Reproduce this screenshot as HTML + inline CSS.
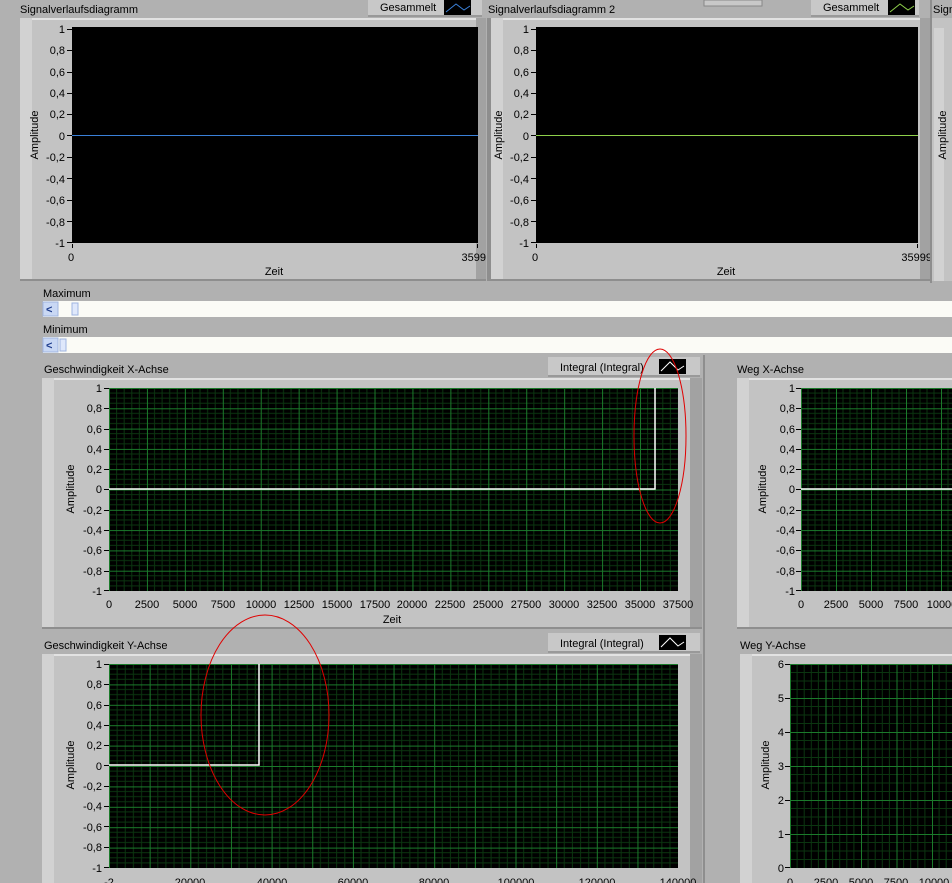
<!DOCTYPE html>
<html><head><meta charset="utf-8"><style>
html,body{margin:0;padding:0;background:#b1b1b1;}
svg{display:block}
text{font-family:"Liberation Sans",Tahoma,sans-serif;font-size:11px;fill:#000}
.e{text-anchor:end}.m{text-anchor:middle}
.t{stroke:#000;stroke-width:1;shape-rendering:crispEdges}
</style></head><body>
<svg width="952" height="883" viewBox="0 0 952 883" xmlns="http://www.w3.org/2000/svg">
<defs>
<pattern id="gA" patternUnits="userSpaceOnUse" x="109" y="388" width="37.93" height="20.3">
<rect width="37.93" height="20.3" fill="#000"/>
<path d="M7.59 0V20.3M15.17 0V20.3M22.76 0V20.3M30.34 0V20.3M0 5.07H37.93M0 10.15H37.93M0 15.22H37.93" stroke="#0b3510" stroke-width="1"/>
<path d="M0.5 0V20.3M0 0.5H37.93" stroke="#1b7a2b" stroke-width="1"/>
</pattern>
<pattern id="gB" patternUnits="userSpaceOnUse" x="109" y="664" width="40.65" height="20.4">
<rect width="40.65" height="20.4" fill="#000"/>
<path d="M8.13 0V20.4M16.26 0V20.4M24.39 0V20.4M32.52 0V20.4M0 5.1H40.65M0 10.2H40.65M0 15.3H40.65" stroke="#0b3510"/>
<path d="M0.5 0V20.4M0 0.5H40.65" stroke="#1b7a2b"/>
</pattern>
<pattern id="gC" patternUnits="userSpaceOnUse" x="801" y="388" width="35" height="20.3">
<rect width="35" height="20.3" fill="#000"/>
<path d="M7 0V20.3M14 0V20.3M21 0V20.3M28 0V20.3M0 5.07H35M0 10.15H35M0 15.22H35" stroke="#0b3510"/>
<path d="M0.5 0V20.3M0 0.5H35" stroke="#1b7a2b"/>
</pattern>
<pattern id="gD" patternUnits="userSpaceOnUse" x="790" y="664" width="35.5" height="34">
<rect width="35.5" height="34" fill="#000"/>
<path d="M7.1 0V34M14.2 0V34M21.3 0V34M28.4 0V34M0 8.5H35.5M0 17H35.5M0 25.5H35.5" stroke="#0b3510"/>
<path d="M0.5 0V34M0 0.5H35.5" stroke="#1b7a2b"/>
</pattern>
</defs>

<rect x="0" y="0" width="952" height="283" fill="#b1b1b1"/>
<rect x="704" y="0" width="58" height="6" fill="#c8c8c8" stroke="#888"/>
<!-- chart 1 -->
<rect x="20" y="18" width="466" height="263" fill="#c3c3c3"/>
<rect x="20" y="18" width="466" height="2" fill="#e2e2e2"/>
<rect x="20" y="18" width="12" height="263" fill="#d2d2d2"/>
<rect x="476" y="18" width="10" height="263" fill="#a2a2a2"/>
<rect x="20" y="279" width="466" height="2" fill="#8e8e8e"/>
<rect x="72" y="27" width="406" height="216" fill="#000"/>
<rect x="72" y="135" width="406" height="1" fill="#3a80d8"/>
<path class="t" d="M67 29.5H72M67 50.5H72M67 72.5H72M67 93.5H72M67 114.5H72M67 135.5H72M67 157.5H72M67 178.5H72M67 200.5H72M67 221.5H72M67 242.5H72M72.5 244V248M477.5 244V248"/>
<text x="20" y="13">Signalverlaufsdiagramm</text>
<rect x="368" y="0" width="114" height="17" fill="#c8c8c8"/><rect x="368" y="15" width="114" height="2" fill="#999"/>
<text x="380" y="11">Gesammelt</text>
<rect x="444" y="0" width="27" height="15" fill="#000"/>
<polyline points="446,12 456,4 464,10 470,6" fill="none" stroke="#3a80d8"/>
<text class="e" x="65" y="33">1</text><text class="e" x="65" y="54">0,8</text><text class="e" x="65" y="76">0,6</text><text class="e" x="65" y="97">0,4</text><text class="e" x="65" y="118">0,2</text><text class="e" x="65" y="140">0</text><text class="e" x="65" y="161">-0,2</text><text class="e" x="65" y="183">-0,4</text><text class="e" x="65" y="204">-0,6</text><text class="e" x="65" y="226">-0,8</text><text class="e" x="65" y="247">-1</text>
<text class="m" transform="translate(38,135) rotate(-90)">Amplitude</text>
<text x="68" y="261">0</text><text class="e" x="486" y="261">3599</text>
<text class="m" x="274" y="275">Zeit</text>

<!-- chart 2 -->
<rect x="487" y="18" width="443" height="263" fill="#c3c3c3"/>
<rect x="487" y="18" width="443" height="2" fill="#e2e2e2"/>
<rect x="487" y="18" width="4" height="263" fill="#8e8e8e"/>
<rect x="491" y="18" width="12" height="263" fill="#d2d2d2"/>
<rect x="920" y="18" width="10" height="263" fill="#a2a2a2"/>
<rect x="487" y="279" width="443" height="2" fill="#8e8e8e"/>
<rect x="536" y="27" width="382" height="216" fill="#000"/>
<rect x="536" y="135" width="382" height="1" fill="#8ed04a"/>
<path class="t" d="M531 29.5H536M531 50.5H536M531 72.5H536M531 93.5H536M531 114.5H536M531 135.5H536M531 157.5H536M531 178.5H536M531 200.5H536M531 221.5H536M531 242.5H536M536.5 244V248M917.5 244V248"/>
<text x="488" y="13">Signalverlaufsdiagramm 2</text>
<rect x="811" y="0" width="108" height="17" fill="#c8c8c8"/><rect x="811" y="15" width="108" height="2" fill="#999"/>
<text x="823" y="11">Gesammelt</text>
<rect x="888" y="0" width="27" height="15" fill="#000"/>
<polyline points="890,12 900,4 908,10 914,6" fill="none" stroke="#8ed04a"/>
<text class="e" x="529" y="33">1</text><text class="e" x="529" y="54">0,8</text><text class="e" x="529" y="76">0,6</text><text class="e" x="529" y="97">0,4</text><text class="e" x="529" y="118">0,2</text><text class="e" x="529" y="140">0</text><text class="e" x="529" y="161">-0,2</text><text class="e" x="529" y="183">-0,4</text><text class="e" x="529" y="204">-0,6</text><text class="e" x="529" y="226">-0,8</text><text class="e" x="529" y="247">-1</text>
<text class="m" transform="translate(502,135) rotate(-90)">Amplitude</text>
<text x="532" y="261">0</text><text class="e" x="932" y="261">35999</text>
<text class="m" x="726" y="275">Zeit</text>
<rect x="932" y="18" width="20" height="263" fill="#c3c3c3"/>
<rect x="930" y="0" width="2" height="283" fill="#8e8e8e"/>
<rect x="934" y="28" width="10" height="253" fill="#d2d2d2"/>
<text x="933" y="13">Sign</text>
<text class="m" transform="translate(946,135) rotate(-90)">Amplitude</text>

<!-- sliders -->
<rect x="0" y="283" width="952" height="72" fill="#b1b1b1"/>
<text x="43" y="297">Maximum</text>
<rect x="43" y="301" width="909" height="16" fill="#fbfbf6"/>
<rect x="43" y="302" width="15" height="14" fill="#c9d8f4" stroke="#9fb4e0"/>
<text x="46" y="313" style="font-weight:bold;fill:#1e3c8c">&lt;</text>
<rect x="72" y="303" width="6" height="12" fill="#dfe8fb" stroke="#9fb4e0"/>
<text x="43" y="333">Minimum</text>
<rect x="43" y="337" width="909" height="16" fill="#fbfbf6"/>
<rect x="43" y="338" width="15" height="14" fill="#c9d8f4" stroke="#9fb4e0"/>
<text x="46" y="349" style="font-weight:bold;fill:#1e3c8c">&lt;</text>
<rect x="60" y="339" width="6" height="12" fill="#dfe8fb" stroke="#9fb4e0"/>

<!-- middle chart -->
<text x="44" y="373">Geschwindigkeit X-Achse</text>
<rect x="42" y="378" width="660" height="251" fill="#c3c3c3"/>
<rect x="42" y="378" width="660" height="2" fill="#e2e2e2"/>
<rect x="42" y="378" width="12" height="251" fill="#d2d2d2"/>
<rect x="690" y="378" width="12" height="251" fill="#a2a2a2"/>
<rect x="42" y="627" width="660" height="2" fill="#8e8e8e"/>
<rect x="109" y="388" width="569" height="203" fill="url(#gA)"/>
<polyline points="109,489 655,489 655,388" fill="none" stroke="#fff" stroke-width="1.5"/>
<path class="t" d="M104 388.5H109M104 408.5H109M104 429.5H109M104 449.5H109M104 469.5H109M104 489.5H109M104 510.5H109M104 530.5H109M104 550.5H109M104 571.5H109M104 590.5H109"/>
<rect x="548" y="357" width="152" height="20" fill="#c8c8c8"/><rect x="548" y="375" width="152" height="2" fill="#999"/>
<text x="560" y="371">Integral (Integral)</text>
<rect x="659" y="359" width="27" height="15" fill="#000"/>
<polyline points="661,371 670,362 678,370 684,366" fill="none" stroke="#fff"/>
<text class="e" x="102" y="392">1</text><text class="e" x="102" y="412">0,8</text><text class="e" x="102" y="433">0,6</text><text class="e" x="102" y="453">0,4</text><text class="e" x="102" y="473">0,2</text><text class="e" x="102" y="493">0</text><text class="e" x="102" y="514">-0,2</text><text class="e" x="102" y="534">-0,4</text><text class="e" x="102" y="554">-0,6</text><text class="e" x="102" y="575">-0,8</text><text class="e" x="102" y="595">-1</text>
<text class="m" transform="translate(74,489) rotate(-90)">Amplitude</text>
<text class="m" x="109" y="608">0</text><text class="m" x="147" y="608">2500</text><text class="m" x="185" y="608">5000</text><text class="m" x="223" y="608">7500</text><text class="m" x="261" y="608">10000</text><text class="m" x="299" y="608">12500</text><text class="m" x="337" y="608">15000</text><text class="m" x="375" y="608">17500</text><text class="m" x="412" y="608">20000</text><text class="m" x="450" y="608">22500</text><text class="m" x="488" y="608">25000</text><text class="m" x="526" y="608">27500</text><text class="m" x="564" y="608">30000</text><text class="m" x="602" y="608">32500</text><text class="m" x="640" y="608">35000</text><text class="m" x="678" y="608">37500</text>
<text class="m" x="392" y="623">Zeit</text>

<!-- Weg X -->
<text x="737" y="373">Weg X-Achse</text>
<rect x="737" y="378" width="215" height="251" fill="#c3c3c3"/>
<rect x="737" y="378" width="215" height="2" fill="#e2e2e2"/>
<rect x="737" y="378" width="12" height="251" fill="#d2d2d2"/>
<rect x="737" y="627" width="215" height="2" fill="#8e8e8e"/>
<rect x="703" y="355" width="2" height="528" fill="#8e8e8e"/>
<rect x="801" y="388" width="151" height="203" fill="url(#gC)"/>
<line x1="801" y1="489" x2="952" y2="489" stroke="#fff" stroke-width="1.5"/>
<path class="t" d="M796 388.5H801M796 408.5H801M796 429.5H801M796 449.5H801M796 469.5H801M796 489.5H801M796 510.5H801M796 530.5H801M796 550.5H801M796 571.5H801M796 590.5H801"/>
<text class="e" x="795" y="392">1</text><text class="e" x="795" y="412">0,8</text><text class="e" x="795" y="433">0,6</text><text class="e" x="795" y="453">0,4</text><text class="e" x="795" y="473">0,2</text><text class="e" x="795" y="493">0</text><text class="e" x="795" y="514">-0,2</text><text class="e" x="795" y="534">-0,4</text><text class="e" x="795" y="554">-0,6</text><text class="e" x="795" y="575">-0,8</text><text class="e" x="795" y="595">-1</text>
<text class="m" transform="translate(766,489) rotate(-90)">Amplitude</text>
<text class="m" x="801" y="608">0</text><text class="m" x="836" y="608">2500</text><text class="m" x="871" y="608">5000</text><text class="m" x="906" y="608">7500</text><text class="m" x="942" y="608">10000</text>

<!-- bottom chart -->
<text x="44" y="649">Geschwindigkeit Y-Achse</text>
<rect x="42" y="654" width="660" height="229" fill="#c3c3c3"/>
<rect x="42" y="654" width="660" height="2" fill="#e2e2e2"/>
<rect x="42" y="654" width="12" height="229" fill="#d2d2d2"/>
<rect x="690" y="654" width="12" height="229" fill="#a2a2a2"/>
<rect x="109" y="664" width="569" height="204" fill="url(#gB)"/>
<polyline points="109,765 259,765 259,664" fill="none" stroke="#fff" stroke-width="1.5"/>
<path class="t" d="M104 664.5H109M104 684.5H109M104 705.5H109M104 725.5H109M104 745.5H109M104 765.5H109M104 786.5H109M104 806.5H109M104 826.5H109M104 847.5H109M104 867.5H109"/>
<rect x="548" y="633" width="152" height="20" fill="#c8c8c8"/><rect x="548" y="651" width="152" height="2" fill="#999"/>
<text x="560" y="647">Integral (Integral)</text>
<rect x="659" y="635" width="27" height="15" fill="#000"/>
<polyline points="661,647 670,638 678,646 684,642" fill="none" stroke="#fff"/>
<text class="e" x="102" y="668">1</text><text class="e" x="102" y="688">0,8</text><text class="e" x="102" y="709">0,6</text><text class="e" x="102" y="729">0,4</text><text class="e" x="102" y="749">0,2</text><text class="e" x="102" y="770">0</text><text class="e" x="102" y="790">-0,2</text><text class="e" x="102" y="810">-0,4</text><text class="e" x="102" y="831">-0,6</text><text class="e" x="102" y="851">-0,8</text><text class="e" x="102" y="872">-1</text>
<text class="m" transform="translate(74,765) rotate(-90)">Amplitude</text>
<text class="m" x="109" y="886">-2</text><text class="m" x="190" y="886">20000</text><text class="m" x="272" y="886">40000</text><text class="m" x="353" y="886">60000</text><text class="m" x="434" y="886">80000</text><text class="m" x="516" y="886">100000</text><text class="m" x="597" y="886">120000</text><text class="m" x="678" y="886">140000</text>

<!-- Weg Y -->
<text x="740" y="649">Weg Y-Achse</text>
<rect x="740" y="654" width="212" height="229" fill="#c3c3c3"/>
<rect x="740" y="654" width="212" height="2" fill="#e2e2e2"/>
<rect x="740" y="654" width="12" height="229" fill="#d2d2d2"/>
<rect x="790" y="664" width="162" height="204" fill="url(#gD)"/>
<path class="t" d="M785 664.5H790M785 698.5H790M785 732.5H790M785 766.5H790M785 800.5H790M785 834.5H790M785 867.5H790"/>
<text class="e" x="784" y="668">6</text><text class="e" x="784" y="702">5</text><text class="e" x="784" y="736">4</text><text class="e" x="784" y="770">3</text><text class="e" x="784" y="804">2</text><text class="e" x="784" y="838">1</text><text class="e" x="784" y="872">0</text>
<text class="m" transform="translate(769,765) rotate(-90)">Amplitude</text>
<text class="m" x="790" y="886">0</text><text class="m" x="826" y="886">2500</text><text class="m" x="861" y="886">5000</text><text class="m" x="896" y="886">7500</text><text class="m" x="934" y="886">10000</text>

<ellipse cx="660" cy="436" rx="26" ry="87" fill="none" stroke="#e00000" stroke-width="1"/>
<ellipse cx="265" cy="715" rx="64" ry="100" fill="none" stroke="#e00000" stroke-width="1"/>
</svg>
</body></html>
